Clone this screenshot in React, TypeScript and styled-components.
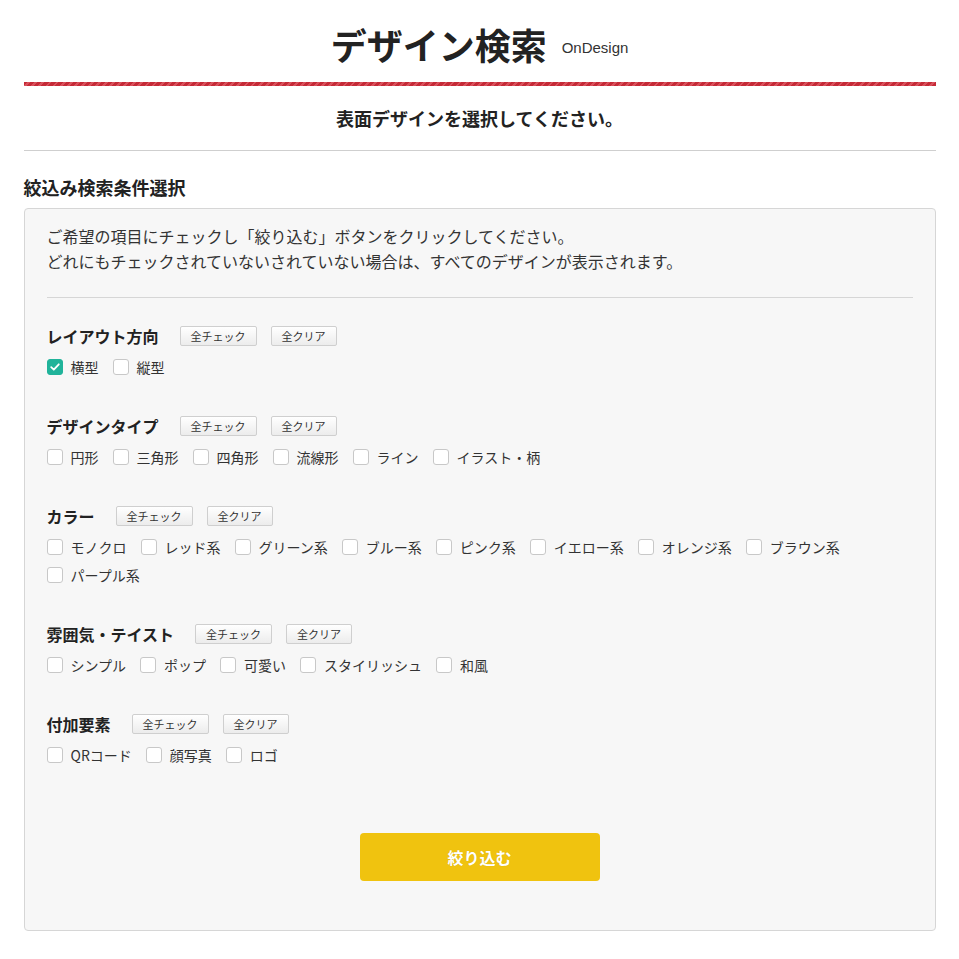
import React, { useState } from "react";
import styled, { createGlobalStyle } from "styled-components";

const Global = createGlobalStyle`
  html, body { margin: 0; padding: 0; background: #fff; }
  body {
    font-family: "Noto Sans CJK JP", "Noto Sans", sans-serif;
    color: #333;
  }
  * { box-sizing: border-box; }
`;

const Page = styled.div`
  width: 912px;
  margin: 0 auto;
`;

const Header = styled.header`
  display: flex;
  justify-content: center;
  align-items: center;
  gap: 15px;
  padding: 22px 0 16px;
`;

const Title = styled.h1`
  margin: 0;
  font-size: 36px;
  line-height: 44px;
  font-weight: 700;
  color: #222;
`;

const Brand = styled.span`
  font-family: "Liberation Sans", Arial, sans-serif;
  font-size: 15px;
  color: #333;
  margin-top: 6px;
`;

const Stripe = styled.div`
  height: 4px;
  background: repeating-linear-gradient(
    -45deg,
    #c52a37 0 3px,
    #d8505b 3px 5px
  );
`;

const Lead = styled.p`
  margin: 0;
  padding: 20px 0;
  line-height: 24px;
  font-size: 18px;
  font-weight: 700;
  text-align: center;
  color: #222;
  border-bottom: 1px solid #cfcfcf;
`;

const SectionTitle = styled.h2`
  margin: 24px 0 9px;
  font-size: 18px;
  line-height: 24px;
  font-weight: 700;
  color: #222;
`;

const Panel = styled.div`
  background: #f7f7f7;
  border: 1px solid #d6d6d6;
  border-radius: 4px;
  padding: 15px 22px 49px;
`;

const Intro = styled.p`
  margin: 0 0 26px;
  font-size: 16px;
  line-height: 25px;
  color: #333;
  padding-bottom: 23px;
  border-bottom: 1px solid #d6d6d6;
`;

const Group = styled.section`
  & + & { margin-top: 33px; }
`;

const GroupHead = styled.div`
  display: flex;
  align-items: center;
  height: 24px;
`;

const GroupName = styled.h3`
  margin: 0 21px 0 0;
  font-size: 16px;
  font-weight: 700;
  color: #222;
  line-height: 24px;
`;

const SmallButton = styled.button`
  height: 20px;
  padding: 0 10px;
  font-family: inherit;
  font-size: 11px;
  line-height: 18px;
  color: #333;
  border: 1px solid #cfcfcf;
  border-radius: 2px;
  background: linear-gradient(#ffffff, #ececec);
  cursor: pointer;
  & + & { margin-left: 14px; }
`;

const Options = styled.div`
  display: flex;
  flex-wrap: wrap;
  column-gap: 14px;
  margin-top: 5px;
`;

const Option = styled.label`
  display: flex;
  align-items: center;
  gap: 8px;
  height: 28px;
  font-size: 14px;
  color: #333;
  cursor: pointer;
`;

const Box = styled.span<{ $on: boolean }>`
  width: 16px;
  height: 16px;
  border-radius: 3px;
  display: flex;
  align-items: center;
  justify-content: center;
  background: ${(p) => (p.$on ? "#20b39a" : "#fff")};
  border: 1px solid ${(p) => (p.$on ? "#20b39a" : "#c8c8c8")};
`;

const Footer = styled.div`
  display: flex;
  justify-content: center;
  margin-top: 64px;
`;

const Submit = styled.button`
  width: 240px;
  height: 48px;
  border: none;
  border-radius: 4px;
  background: #f0c30f;
  color: #fff;
  font-family: inherit;
  font-size: 16px;
  font-weight: 700;
  text-shadow: 0 0 1px rgba(0, 0, 0, 0.15);
  cursor: pointer;
`;

const groups: { name: string; items: string[] }[] = [
  { name: "レイアウト方向", items: ["横型", "縦型"] },
  { name: "デザインタイプ", items: ["円形", "三角形", "四角形", "流線形", "ライン", "イラスト・柄"] },
  {
    name: "カラー",
    items: ["モノクロ", "レッド系", "グリーン系", "ブルー系", "ピンク系", "イエロー系", "オレンジ系", "ブラウン系", "パープル系"],
  },
  { name: "雰囲気・テイスト", items: ["シンプル", "ポップ", "可愛い", "スタイリッシュ", "和風"] },
  { name: "付加要素", items: ["QRコード", "顔写真", "ロゴ"] },
];

const Check = () => (
  <svg width="12" height="12" viewBox="0 0 12 12">
    <path d="M2.2 6.2 L4.8 8.7 L9.8 3.3" fill="none" stroke="#fff" strokeWidth="1.8" strokeLinecap="round" strokeLinejoin="round" />
  </svg>
);

export default function App() {
  const [checked, setChecked] = useState<Record<string, boolean>>({ "横型": true });
  const toggle = (k: string) => setChecked((c) => ({ ...c, [k]: !c[k] }));
  const setAll = (items: string[], v: boolean) =>
    setChecked((c) => {
      const n = { ...c };
      items.forEach((i) => (n[i] = v));
      return n;
    });

  return (
    <Page>
      <Global />
      <Header>
        <Title>デザイン検索</Title>
        <Brand>OnDesign</Brand>
      </Header>
      <Stripe />
      <Lead>表面デザインを選択してください。</Lead>
      <SectionTitle>絞込み検索条件選択</SectionTitle>
      <Panel>
        <Intro>
          ご希望の項目にチェックし「絞り込む」ボタンをクリックしてください。
          <br />
          どれにもチェックされていないされていない場合は、すべてのデザインが表示されます。
        </Intro>
        {groups.map((g) => (
          <Group key={g.name}>
            <GroupHead>
              <GroupName>{g.name}</GroupName>
              <SmallButton onClick={() => setAll(g.items, true)}>全チェック</SmallButton>
              <SmallButton onClick={() => setAll(g.items, false)}>全クリア</SmallButton>
            </GroupHead>
            <Options>
              {g.items.map((it) => (
                <Option key={it} onClick={() => toggle(it)}>
                  <Box $on={!!checked[it]}>{checked[it] && <Check />}</Box>
                  {it}
                </Option>
              ))}
            </Options>
          </Group>
        ))}
        <Footer>
          <Submit>絞り込む</Submit>
        </Footer>
      </Panel>
    </Page>
  );
}
